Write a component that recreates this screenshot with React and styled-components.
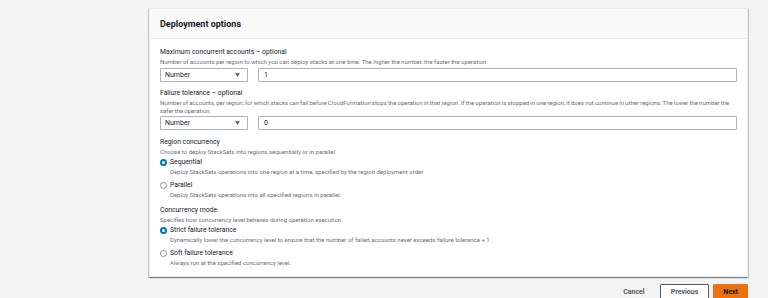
import styled, { createGlobalStyle } from 'styled-components';

const GlobalStyle = createGlobalStyle`
  html, body {
    margin: 0;
    padding: 0;
    background: #f2f3f3;
    overflow: hidden;
  }

  body {
    font-family: Roboto, "Liberation Sans", Arial, sans-serif;
    color: #16191f;
  }

  * {
    box-sizing: border-box;
  }
`;

const Page = styled.div`
  width: 768px;
  padding: 8px 20px 0 149px;
`;

const Card = styled.section`
  background: #fff;
  border: 1px solid #eaeded;
  box-shadow: 0 1px 1px 0 rgba(0, 28, 36, 0.3), 1px 1px 1px 0 rgba(0, 28, 36, 0.15),
    -1px 1px 1px 0 rgba(0, 28, 36, 0.15);
`;

const CardHeader = styled.header`
  height: 30px;
  padding: 0 10px;
  display: flex;
  align-items: center;
  background: #fafafa;
  border-bottom: 1px solid #eaeded;

  h2 {
    margin: 0;
    font-size: 9px;
    font-weight: 700;
  }
`;

const CardBody = styled.div`
  padding: 9px 10px 10px;
  display: flex;
  flex-direction: column;
  gap: 7.5px;
`;

const Field = styled.div`
  display: flex;
  flex-direction: column;
`;

const Label = styled.div`
  font-size: 6.8px;
  line-height: 9px;
  font-weight: 400;
`;

const Description = styled.div`
  margin-top: 1px;
  font-size: 6px;
  line-height: 7.5px;
  color: #687078;
  word-spacing: ${(p) => p.$wordSpacing || 0}px;
`;

const ControlRow = styled.div`
  display: flex;
  gap: 10px;
  margin-top: 2px;
`;

const SelectBox = styled.div`
  width: 88px;
  height: 14px;
  padding: 0 5px 0 4px;
  display: flex;
  align-items: center;
  justify-content: space-between;
  border: 1px solid #aab7b8;
  border-radius: 1px;
  font-size: 7px;
  background: #fff;

  svg {
    width: 5px;
    height: 4px;
    margin-right: 2px;
  }
`;

const TextInput = styled.div`
  flex: 1;
  height: 14px;
  padding: 0 5px;
  display: flex;
  align-items: center;
  border: 1px solid #aab7b8;
  border-radius: 1px;
  font-size: 7px;
`;

const RadioGroup = styled.div`
  margin-top: 3px;
  display: flex;
  flex-direction: column;
  gap: 5px;
`;

const RadioItem = styled.div`
  display: grid;
  grid-template-columns: 10px 1fr;
  align-items: center;

  ${Description} {
    grid-column: 2;
  }
`;

const RadioDot = styled.span`
  width: 7px;
  height: 7px;
  border-radius: 50%;
  background: #fff;
  border: ${(p) => (p.$checked ? '2px solid #0073bb' : '1px solid #879596')};
`;

const Footer = styled.div`
  margin-top: 7px;
  display: flex;
  justify-content: flex-end;
  align-items: center;
`;

const Button = styled.button`
  height: 16px;
  padding: 0 ${(p) => (p.$variant === 'link' ? '0' : p.$variant === 'primary' ? '9px' : '10px')};
  margin-left: ${(p) => (p.$variant === 'primary' ? '4px' : '0')};
  margin-right: ${(p) => (p.$variant === 'link' ? '14px' : '0')};
  font-family: inherit;
  font-size: 7px;
  font-weight: 700;
  border-radius: 1px;
  border: 1px solid
    ${(p) => (p.$variant === 'primary' ? '#ec7211' : p.$variant === 'link' ? 'transparent' : '#545b64')};
  background: ${(p) => (p.$variant === 'primary' ? '#ec7211' : p.$variant === 'link' ? 'transparent' : '#fff')};
  color: ${(p) => (p.$variant === 'primary' ? '#16191f' : '#545b64')};
`;

const Caret = () => (
  <svg viewBox="0 0 10 7">
    <polygon points="0,0 10,0 5,7" fill="#545b64" />
  </svg>
);

const Radio = ({ checked, title, text }) => (
  <RadioItem>
    <RadioDot $checked={checked} />
    <Label>{title}</Label>
    <Description>{text}</Description>
  </RadioItem>
);

const App = () => {
  return (
    <Page>
      <GlobalStyle />
      <Card>
        <CardHeader>
          <h2>Deployment options</h2>
        </CardHeader>
        <CardBody>
          <Field>
            <Label>Maximum concurrent accounts – optional</Label>
            <Description>
              Number of accounts per region to which you can deploy stacks at one time. The higher the number, the
              faster the operation.
            </Description>
            <ControlRow>
              <SelectBox>
                Number
                <Caret />
              </SelectBox>
              <TextInput>1</TextInput>
            </ControlRow>
          </Field>
          <Field>
            <Label>Failure tolerance – optional</Label>
            <Description $wordSpacing={-0.35}>
              Number of accounts, per region, for which stacks can fail before CloudFormation stops the operation in
              that region. If the operation is stopped in one region, it does not continue in other regions. The lower
              the number the safer the operation.
            </Description>
            <ControlRow>
              <SelectBox>
                Number
                <Caret />
              </SelectBox>
              <TextInput>0</TextInput>
            </ControlRow>
          </Field>
          <Field>
            <Label>Region concurrency</Label>
            <Description>Choose to deploy StackSets into regions sequentially or in parallel.</Description>
            <RadioGroup>
              <Radio
                checked
                title="Sequential"
                text="Deploy StackSets operations into one region at a time, specified by the region deployment order."
              />
              <Radio title="Parallel" text="Deploy StackSets operations into all specified regions in parallel." />
            </RadioGroup>
          </Field>
          <Field>
            <Label>Concurrency mode</Label>
            <Description>Specifies how concurrency level behaves during operation execution.</Description>
            <RadioGroup>
              <Radio
                checked
                title="Strict failure tolerance"
                text="Dynamically lower the concurrency level to ensure that the number of failed accounts never exceeds failure tolerance + 1."
              />
              <Radio title="Soft failure tolerance" text="Always run at the specified concurrency level." />
            </RadioGroup>
          </Field>
        </CardBody>
      </Card>
      <Footer>
        <Button $variant="link">Cancel</Button>
        <Button>Previous</Button>
        <Button $variant="primary">Next</Button>
      </Footer>
    </Page>
  );
};

export default App;
